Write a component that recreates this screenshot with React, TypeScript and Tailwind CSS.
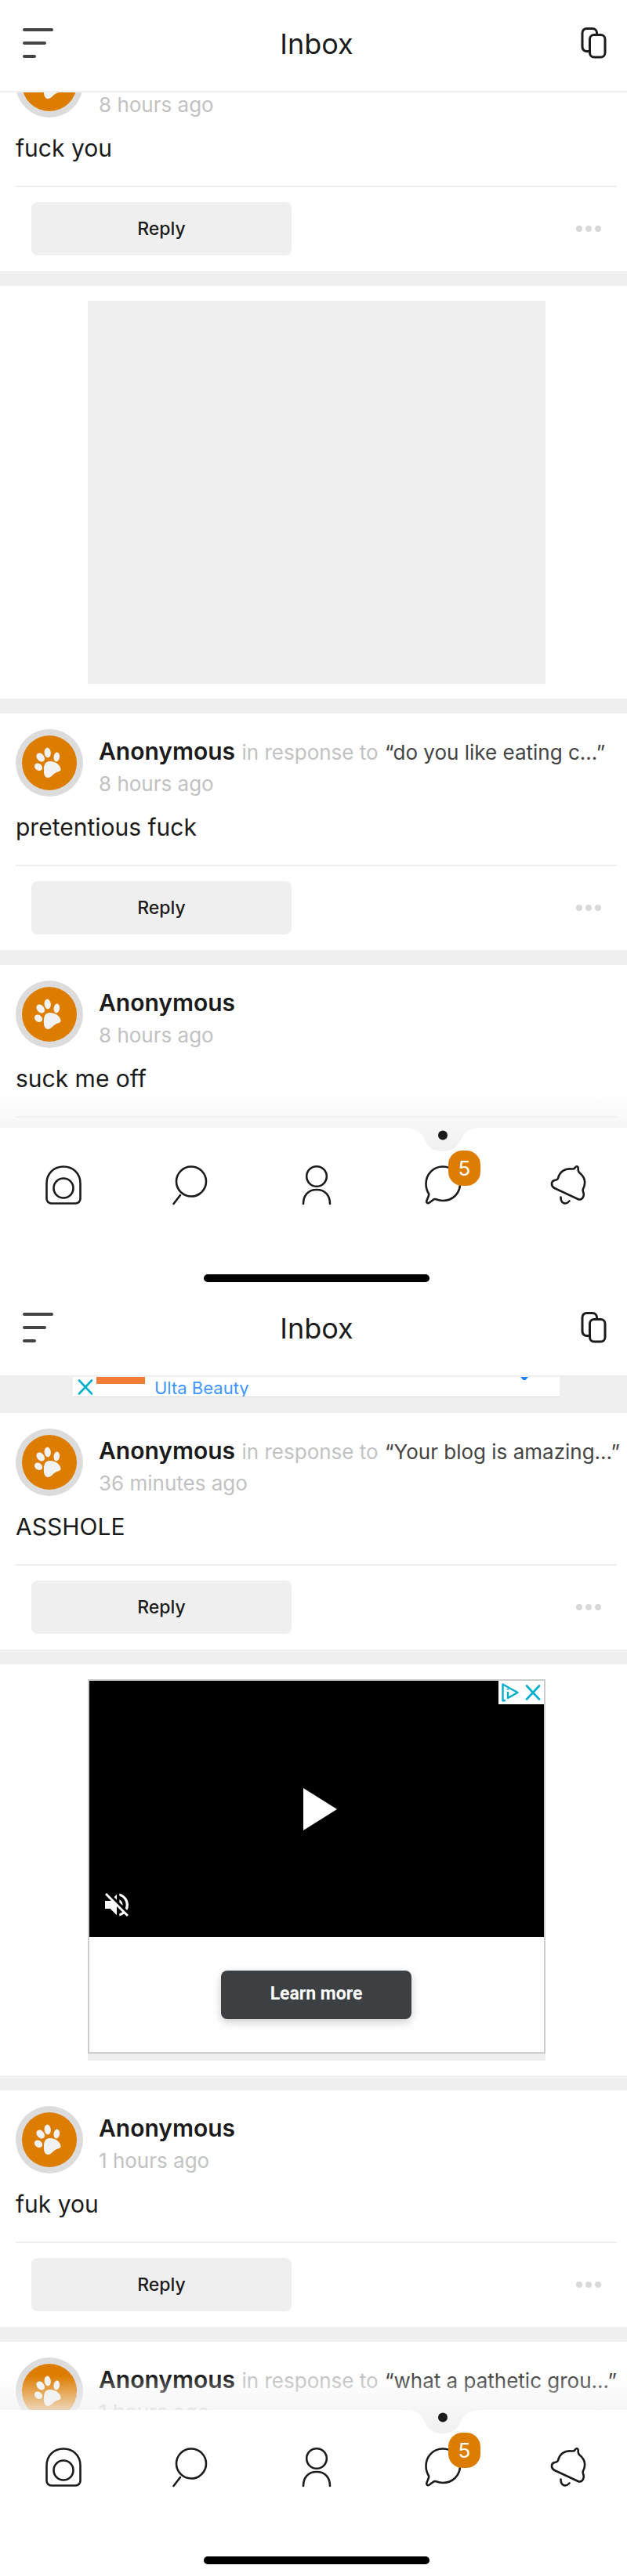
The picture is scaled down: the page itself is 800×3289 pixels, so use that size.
import { useId } from "react";
import type { ReactNode } from "react";

/** 받은 메시지 카드 데이터 */
type Message = {
  id: string;
  time: string;
  body: string;
  quote?: string; // 답글 대상 (없으면 표시 안 함)
};

const firstMessages: Record<"top" | "middle" | "last", Message> = {
  top: { id: "m1", time: "8 hours ago", body: "fuck you" },
  middle: {
    id: "m2",
    time: "8 hours ago",
    body: "pretentious fuck",
    quote: "“do you like eating c...”",
  },
  last: { id: "m3", time: "8 hours ago", body: "suck me off" },
};

const secondMessages: Record<"top" | "middle" | "last", Message> = {
  top: {
    id: "m4",
    time: "36 minutes ago",
    body: "ASSHOLE",
    quote: "“Your blog is amazing...”",
  },
  middle: { id: "m5", time: "1 hours ago", body: "fuk you" },
  last: {
    id: "m6",
    time: "1 hours ago",
    body: "",
    quote: "“what a pathetic grou...”",
  },
};

/* ====== 상단 바 ====== */
function Header() {
  return (
    <header className="flex h-[118px] items-start justify-between border-b-2 border-[#efefef] bg-white pt-[34px] pr-[32px] pl-[29px]">
      <button type="button" aria-label="Menu" className="flex w-10 flex-col gap-[13px] pt-[2px]">
        <span className="h-[4px] w-[39px] rounded-full bg-[#444]" />
        <span className="h-[4px] w-[30px] rounded-full bg-[#444]" />
        <span className="h-[4px] w-[17px] rounded-full bg-[#444]" />
      </button>
      <h1 className="text-[36px] leading-[44px] text-[#1b1b1b]">Inbox</h1>
      <button type="button" aria-label="Copy" className="w-9">
        <svg viewBox="0 0 36 42" className="h-[42px] w-9" fill="none" stroke="#1b1b1b" strokeWidth="3">
          <path d="M13 31.500H9.500a5.500 5.500 0 0 1-5.500-5.500V8a5.500 5.500 0 0 1 5.500-5.500H17A5.500 5.500 0 0 1 22.500 8v2.500" />
          <rect x="13.500" y="10.500" width="19.500" height="28.500" rx="5.500" />
        </svg>
      </button>
    </header>
  );
}

/* ====== 발바닥 아바타 ====== */
function PawAvatar() {
  return (
    <svg viewBox="0 0 86 86" className="size-[86px] shrink-0" aria-hidden="true">
      <circle cx="43" cy="43" r="43" fill="#dcdcdc" />
      <circle cx="43" cy="43" r="35" fill="#dd7d00" />
      <g fill="#f2f2f2">
        <ellipse cx="40.700" cy="30" rx="4.100" ry="6.400" transform="rotate(-6 40.700 30)" />
        <ellipse cx="31.700" cy="36" rx="4.500" ry="6.200" transform="rotate(-42 31.700 36)" />
        <ellipse cx="52.300" cy="35.500" rx="3.800" ry="6" transform="rotate(8 52.300 35.500)" />
        <ellipse cx="29" cy="48.300" rx="5.500" ry="4.300" transform="rotate(35 29 48.300)" />
        <path d="M41 41.400c7-1.400 15 2.600 16.500 9 .8 4-4 3-8.500 6.600-3 2.600-5 5.500-8.500 5-4.300-.8-4.900-6.500-4.500-12 .3-4 1.500-7.800 5-8.600Z" />
      </g>
    </svg>
  );
}

function Divider() {
  return <div className="h-[19px] bg-[#efefef]" />;
}

/* ====== 메시지 카드 ====== */
function MessageCard({ message, className = "" }: { message: Message; className?: string }) {
  return (
    <article className={`bg-white p-5 ${className}`}>
      <div className="flex h-[86px] gap-5">
        <PawAvatar />
        <div className="min-w-0 flex-1 pt-[9px] whitespace-nowrap">
          <p className="h-[38px] text-[30px] leading-[38px]">
            <span className="font-semibold text-[#1b1b1b]">Anonymous</span>
            {message.quote ? (
              <>
                {" "}
                <span className="text-[26px] text-[#c2c2c2]">in response to</span>{" "}
                <a href="#post" className="text-[26px] text-[#444]">
                  {message.quote}
                </a>
              </>
            ) : null}
          </p>
          <p className="mt-1 text-[26px] leading-[38px] text-[#c2c2c2]">{message.time}</p>
        </div>
      </div>
      <p className="mt-4 h-[71px] text-[30px] leading-[46px] text-[#1b1b1b]">{message.body}</p>
      <div className="flex items-center justify-between border-t-2 border-[#efefef] px-5 pt-[19px]">
        <button
          type="button"
          className="h-[68px] w-[332px] rounded-lg bg-[#efefef] text-[23px] font-medium text-[#1b1b1b]"
        >
          Reply
        </button>
        <button type="button" aria-label="More" className="flex gap-1">
          <span className="size-2 rounded-full bg-[#d9d9d9]" />
          <span className="size-2 rounded-full bg-[#d9d9d9]" />
          <span className="size-2 rounded-full bg-[#d9d9d9]" />
        </button>
      </div>
    </article>
  );
}

/* ====== 하단 탭 ====== */
function TabIcon({ label, children }: { label: string; children: ReactNode }) {
  return (
    <a href={`#${label.toLowerCase()}`} aria-label={label} className="relative flex flex-1 justify-center">
      <svg
        viewBox="0 0 48 52"
        className="h-[52px] w-12"
        fill="none"
        stroke="#1b1b1b"
        strokeWidth="2.600"
        strokeLinecap="round"
        strokeLinejoin="round"
      >
        {children}
      </svg>
      {label === "Messages" ? (
        <span className="absolute -top-[18px] left-1/2 ml-[7px] flex h-[45px] w-[41px] items-center justify-center rounded-[18px] bg-[#dd7d00] text-[26px] text-white">
          5
        </span>
      ) : null}
    </a>
  );
}

function TabBar({ className = "" }: { className?: string }) {
  const shade = useId();

  return (
    <nav className={`relative bg-white ${className}`}>
      {/* 목록 아래쪽 그림자 */}
      <div className="pointer-events-none absolute inset-x-0 bottom-full h-11 bg-linear-to-b from-[#f3f3f3]/0 to-[#f3f3f3]/75" />
      {/* 선택된 탭 표시 */}
      <div className="absolute inset-x-0 top-0 flex">
        <span className="flex-3" />
        <span className="flex flex-1 justify-center">
          <svg viewBox="0 0 96 32" className="h-8 w-24" aria-hidden="true">
            <defs>
              <linearGradient id={shade} x1="0" y1="0" x2="0" y2="1">
                <stop offset="0" stopColor="#f6f6f6" />
                <stop offset="1" stopColor="#f0f0f0" />
              </linearGradient>
            </defs>
            <path d="M0 0c13 0 20 5 23.500 12C27 21 33 30 48 30s21-9 24.500-18C76 5 83 0 96 0Z" fill={`url(#${shade})`} />
            <circle cx="48" cy="9.500" r="6" fill="#1b1b1b" />
          </svg>
        </span>
        <span className="flex-1" />
      </div>
      <div className="flex pt-[47px]">
        <TabIcon label="Home">
          <path d="M2.500 24C2.500 11 12 2.500 24 2.500S45.500 11 45.500 24v19.500a6 6 0 0 1-6 6h-31a6 6 0 0 1-6-6Z" />
          <circle cx="24" cy="30" r="12.500" />
        </TabIcon>
        <TabIcon label="Search">
          <circle cx="26" cy="21.500" r="19" />
          <path d="M12 39 3.500 50" />
        </TabIcon>
        <TabIcon label="Profile">
          <circle cx="24" cy="15" r="12.800" />
          <path d="M7 50c0-11 6.500-18 17-18s17 7 17 18" />
        </TabIcon>
        <TabIcon label="Messages">
          <path d="M6 37C3.500 33 2.500 29 2.500 24.500 2.500 12 12 2.500 24 2.500S46 12 46 24.500 36 46 24 46c-3 0-5.500-.5-8.500-1.700-1.300-.5-2.300-.4-3.500.4l-5.500 4c-2 1.300-3.700-.2-3.200-2.400L6 39.500c.3-1 .3-1.700 0-2.500Z" />
        </TabIcon>
        <TabIcon label="Activity">
          <path d="M10 17.500C12 9 19 4.500 27 5.500c2 .2 3.800.1 4.700-1.500 1.300-2.800 4.300-2 4 1-.2 2 .1 3.500 1.300 5C44.500 16 46 23 42 31c-.6 1.500-.4 2.500.2 4 1.800 5-1 10-5.700 9.500L5.500 30C1 27.500.5 21.500 5.500 20c2-.5 4-.5 4.500-2.500Z" />
          <path d="M13.500 41.500c0 8 6 10.500 11 5" />
        </TabIcon>
      </div>
      <div className="flex justify-center pt-[88px]">
        <span className="h-[10px] w-[288px] rounded-full bg-black" />
      </div>
    </nav>
  );
}

/* ====== 광고 ====== */
function BannerAd() {
  return (
    <aside className="flex h-[46px] justify-center bg-[#efefef]">
      <div className="flex h-[26px] w-[621px] overflow-hidden border-b border-[#ddd] bg-white pl-[6px]">
        <button type="button" aria-label="Close ad" className="w-5">
          <CloseIcon />
        </button>
        <span className="ml-1 h-[9px] w-[62px] bg-[#f47d38]" />
        <a href="#ulta" className="ml-3 flex-1 text-[22px] leading-[28px] text-[#4096ff]">
          Ulta Beauty
        </a>
        <svg viewBox="0 0 10 5" className="mr-10 h-[5px] w-[10px]" fill="#1a86ff" aria-hidden="true">
          <path d="M0 0h10L6.500 4h-3Z" />
        </svg>
      </div>
    </aside>
  );
}

function CloseIcon() {
  return (
    <svg viewBox="0 0 20 20" className="size-5" fill="none" stroke="#00aecd" strokeWidth="2.600" strokeLinecap="round">
      <path d="m2 1.500 16 17M18 1.500l-16 17" />
    </svg>
  );
}

function VideoAd() {
  return (
    <aside className="flex justify-center bg-white py-[19px]">
      <div className="w-[584px] bg-[#efefef] pb-[9px]">
        <div className="border-2 border-[#ccc] bg-white">
          <div className="relative flex h-[327px] items-center justify-center bg-black">
            <div className="absolute top-0 right-0 flex h-[30px] items-center gap-2 bg-white px-1">
              <svg
                viewBox="0 0 22 24"
                className="h-6 w-[22px]"
                fill="none"
                stroke="#00aecd"
                strokeWidth="2.400"
                strokeLinejoin="round"
              >
                <path d="M5 22 1.500 22.500v-21L20.500 12 8 19v-8M8 7v1.500" />
              </svg>
              <button type="button" aria-label="Close ad" className="w-5">
                <CloseIcon />
              </button>
            </div>
            <button type="button" aria-label="Play" className="ml-[10px]">
              <svg viewBox="0 0 43 54" className="h-[54px] w-[43px]" fill="#fff">
                <path d="M0 0 43 27 0 54Z" />
              </svg>
            </button>
            <button type="button" aria-label="Unmute" className="absolute bottom-[21px] left-[15px]">
              <svg viewBox="0 0 24 24" className="size-10" fill="#fff">
                <path d="M16.500 12A4.500 4.500 0 0 0 14 7.970v2.210l2.450 2.450c.03-.2.050-.41.050-.63Zm2.500 0c0 .94-.2 1.820-.54 2.640l1.510 1.510A8.800 8.800 0 0 0 21 12c0-4.280-2.990-7.860-7-8.770v2.060c2.890.86 5 3.540 5 6.710ZM4.270 3 3 4.270 7.730 9H3v6h4l5 5v-6.730l4.250 4.250c-.67.520-1.420.93-2.250 1.180v2.060a8.990 8.990 0 0 0 3.690-1.810L19.730 21 21 19.730l-9-9L4.270 3ZM12 4 9.910 6.090 12 8.180V4Z" />
              </svg>
            </button>
          </div>
          <div className="flex h-[147px] items-center justify-center">
            <button
              type="button"
              className="h-[62px] w-[243px] rounded-lg bg-[#3c4043] font-[Roboto,sans-serif] text-[23px] font-bold text-white shadow-[0_4px_12px_rgba(0,0,0,0.2)]"
            >
              Learn more
            </button>
          </div>
        </div>
      </div>
    </aside>
  );
}

export default function App() {
  return (
    <main className="overflow-x-hidden bg-white font-[Inter,sans-serif]">
      {/* 내용이 화면 오른쪽 끝을 살짝 넘어간다 */}
      <div className="-mr-[7px]">
        <section>
          <Header />
          <div className="overflow-hidden">
            {/* 위로 스크롤된 카드 */}
            <MessageCard message={firstMessages.top} className="-mt-[74px]" />
            <Divider />
            <div className="flex justify-center py-[19px]">
              <div className="h-[489px] w-[584px] bg-[#efefef]" />
            </div>
            <Divider />
            <MessageCard message={firstMessages.middle} />
            <Divider />
            <MessageCard message={firstMessages.last} className="h-[208px] overflow-hidden" />
          </div>
          <TabBar className="pb-[3px]" />
        </section>

        <section>
          <Header />
          <BannerAd />
          <MessageCard message={secondMessages.top} />
          <Divider />
          <VideoAd />
          <Divider />
          <MessageCard message={secondMessages.middle} />
          <Divider />
          <MessageCard message={secondMessages.last} className="h-[87px] overflow-hidden" />
          <TabBar className="pb-[15px]" />
        </section>
      </div>
    </main>
  );
}
